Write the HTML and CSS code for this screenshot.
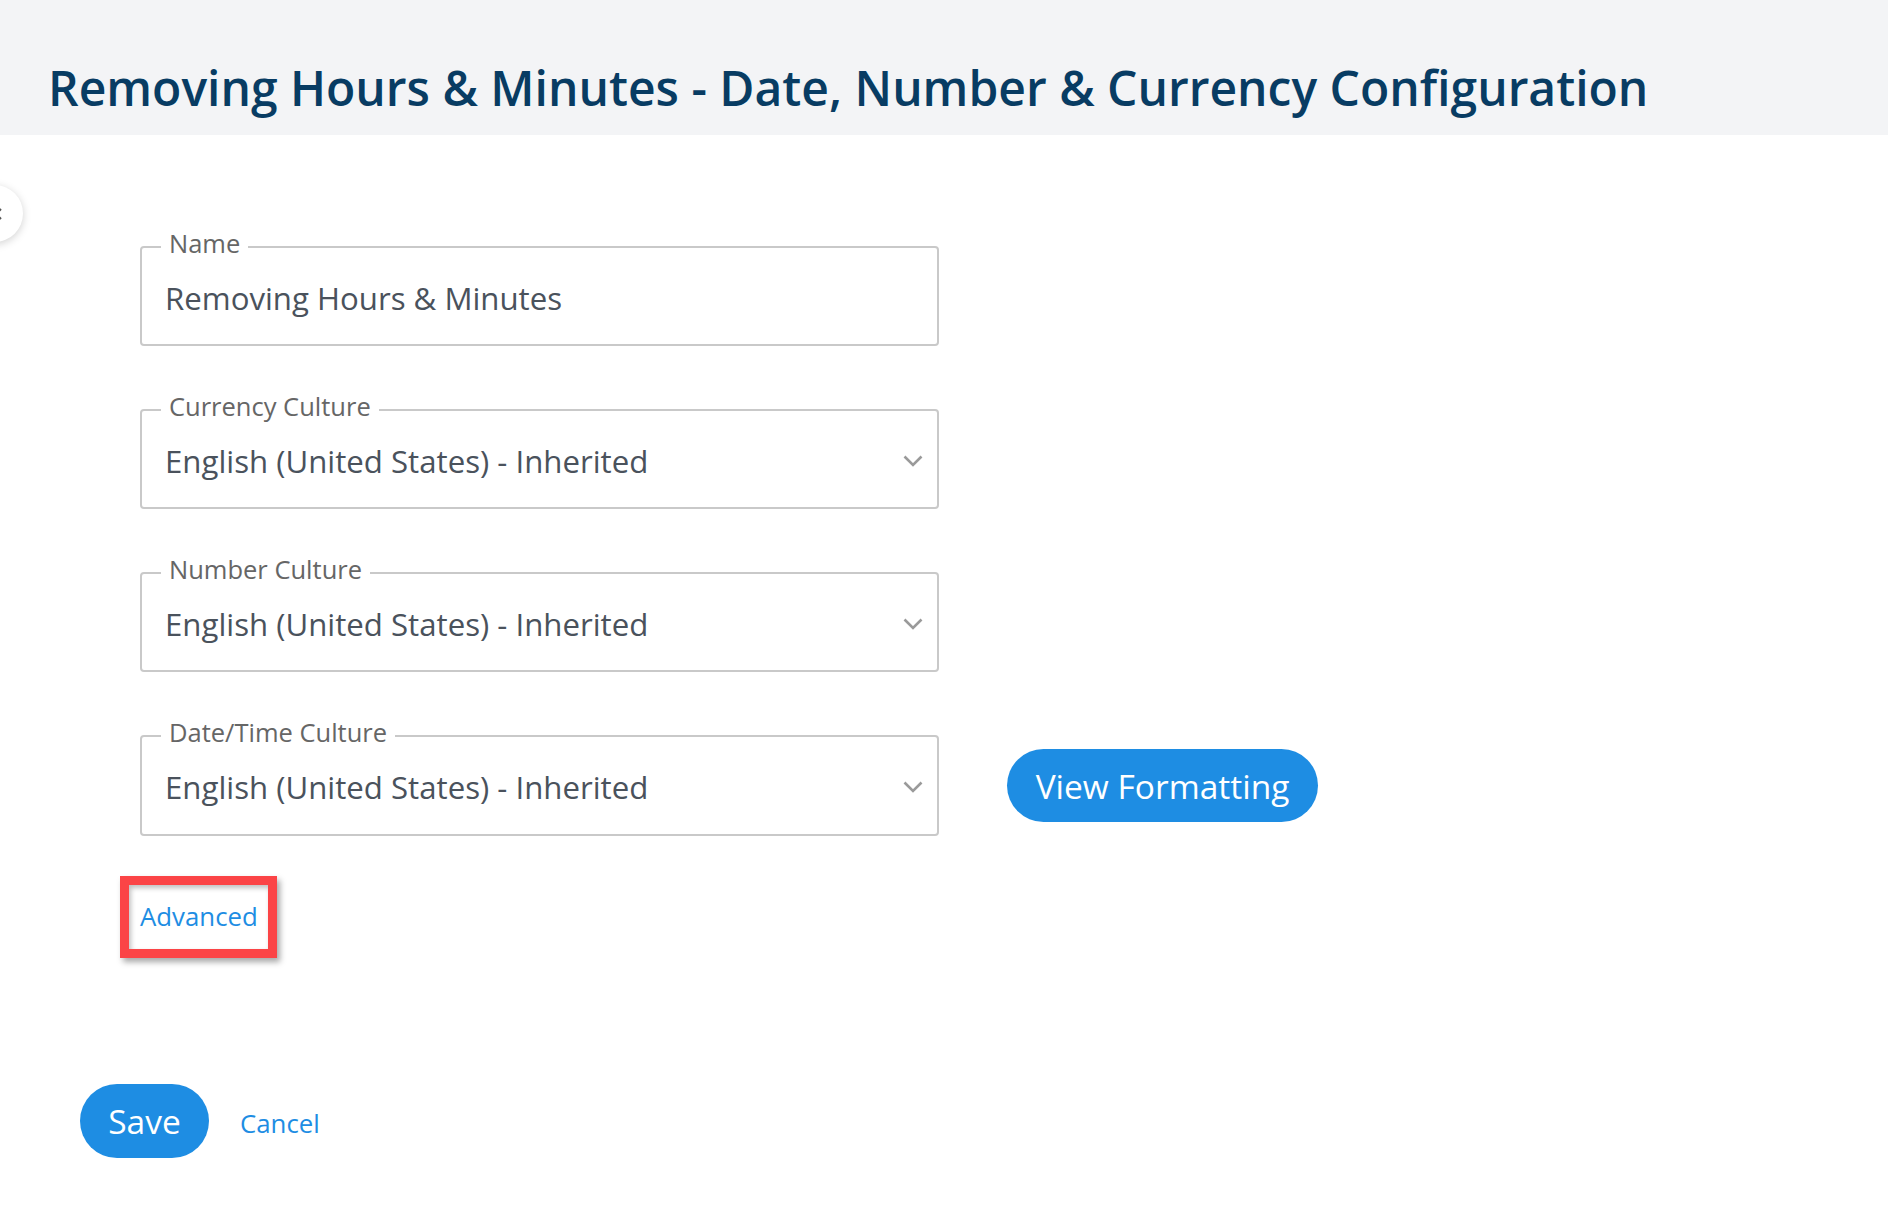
FILE: index.html
```html
<!DOCTYPE html>
<html lang="en">
<head>
<meta charset="utf-8">
<title>Removing Hours &amp; Minutes</title>
<link rel="stylesheet" href="styles.css">
</head>
<body>
<header class="page-header">
  <h1 class="page-title">Removing Hours &amp; Minutes - Date, Number &amp; Currency Configuration</h1>
</header>
<div class="side-toggle"><svg width="10" height="14" viewBox="0 0 10 14"><path d="M8 2 L3 7 L8 12" fill="none" stroke="#555" stroke-width="2"/></svg></div>
<main class="content">
  <form class="form">
    <div class="field">
      <span class="field-label">Name</span>
      <span class="field-value">Removing Hours &amp; Minutes</span>
    </div>
    <div class="field">
      <span class="field-label">Currency Culture</span>
      <span class="field-value">English (United States) - Inherited</span>
      <svg class="chevron" width="20" height="12" viewBox="0 0 20 12"><path d="M1.5 1.5 L10 10 L18.5 1.5" fill="none" stroke="#9a9a9a" stroke-width="2.6"/></svg>
    </div>
    <div class="field">
      <span class="field-label">Number Culture</span>
      <span class="field-value">English (United States) - Inherited</span>
      <svg class="chevron" width="20" height="12" viewBox="0 0 20 12"><path d="M1.5 1.5 L10 10 L18.5 1.5" fill="none" stroke="#9a9a9a" stroke-width="2.6"/></svg>
    </div>
    <div class="row">
      <div class="field field-tall">
        <span class="field-label">Date/Time Culture</span>
        <span class="field-value">English (United States) - Inherited</span>
        <svg class="chevron" width="20" height="12" viewBox="0 0 20 12"><path d="M1.5 1.5 L10 10 L18.5 1.5" fill="none" stroke="#9a9a9a" stroke-width="2.6"/></svg>
      </div>
      <button type="button" class="btn btn-view">View Formatting</button>
    </div>
    <div class="advanced-wrap">
      <a class="link advanced">Advanced</a>
    </div>
  </form>
  <div class="actions">
    <button type="button" class="btn btn-save">Save</button>
    <a class="link cancel">Cancel</a>
  </div>
</main>
</body>
</html>
```

FILE: styles.css
```css
html, body {
  margin: 0;
  padding: 0;
  background: #ffffff;
}
body {
  font-family: "Open Sans", "Noto Sans", sans-serif;
  width: 1888px;
  height: 1212px;
  overflow: hidden;
  position: relative;
}
.page-header {
  height: 135px;
  box-sizing: border-box;
  background: #f3f4f6;
  padding: 59px 0 0 48px;
}
.page-title {
  margin: 0;
  font-family: "Open Sans", sans-serif;
  font-weight: 600;
  font-size: 48px;
  line-height: 57.6px;
  color: #083c63;
  letter-spacing: 0;
  white-space: nowrap;
}
.side-toggle {
  position: absolute;
  left: -34px;
  top: 185px;
  width: 57px;
  height: 57px;
  border-radius: 50%;
  background: #fff;
  box-shadow: 0 2px 8px rgba(0,0,0,0.18);
  display: flex;
  align-items: center;
  justify-content: flex-end;
  padding-right: 20px;
  box-sizing: border-box;
}
.content {
  padding-top: 111px;
}
.form {
  padding-left: 140px;
  display: flex;
  flex-direction: column;
  gap: 63px;
}
.field {
  position: relative;
  width: 799px;
  height: 100px;
  box-sizing: border-box;
  border: 2px solid #c9c9c9;
  border-radius: 4px;
  display: flex;
  align-items: center;
  padding: 3px 14px 0 23px;
}
.field-tall {
  height: 101px;
}
.field-label {
  position: absolute;
  top: -18px;
  left: 19px;
  padding: 0 8px;
  background: #fff;
  font-size: 25.5px;
  line-height: 26px;
  color: #666666;
}
.field-value {
  flex: 1;
  font-size: 31.2px;
  color: #4a525c;
  white-space: nowrap;
}
.chevron {
  flex: none;
}
.row {
  display: flex;
  align-items: center;
  gap: 68px;
}
.btn {
  border: none;
  background: #1e8de3;
  color: #fff;
  font-family: "Open Sans", sans-serif;
  border-radius: 40px;
  cursor: pointer;
}
.btn-view {
  height: 73px;
  width: 311px;
  font-size: 33.5px;
  padding: 0;
}
.advanced-wrap {
  margin-top: -23px;
  margin-left: -20px;
}
.link {
  color: #1e8de3;
  font-size: 25.8px;
  cursor: pointer;
}
.advanced {
  display: inline-block;
  border: 9px solid #fb4446;
  padding: 14px 10px 16px 11px;
  line-height: 34px;
  box-shadow: 3px 4px 6px rgba(0,0,0,0.35), inset 2px 3px 5px rgba(0,0,0,0.25);
}
.actions {
  margin-top: 126px;
  padding-left: 80px;
  display: flex;
  align-items: center;
  gap: 31px;
}
.btn-save {
  width: 129px;
  height: 74px;
  font-size: 33.5px;
  padding: 0;
}
.cancel {
  position: relative;
  top: 2px;
}
```
